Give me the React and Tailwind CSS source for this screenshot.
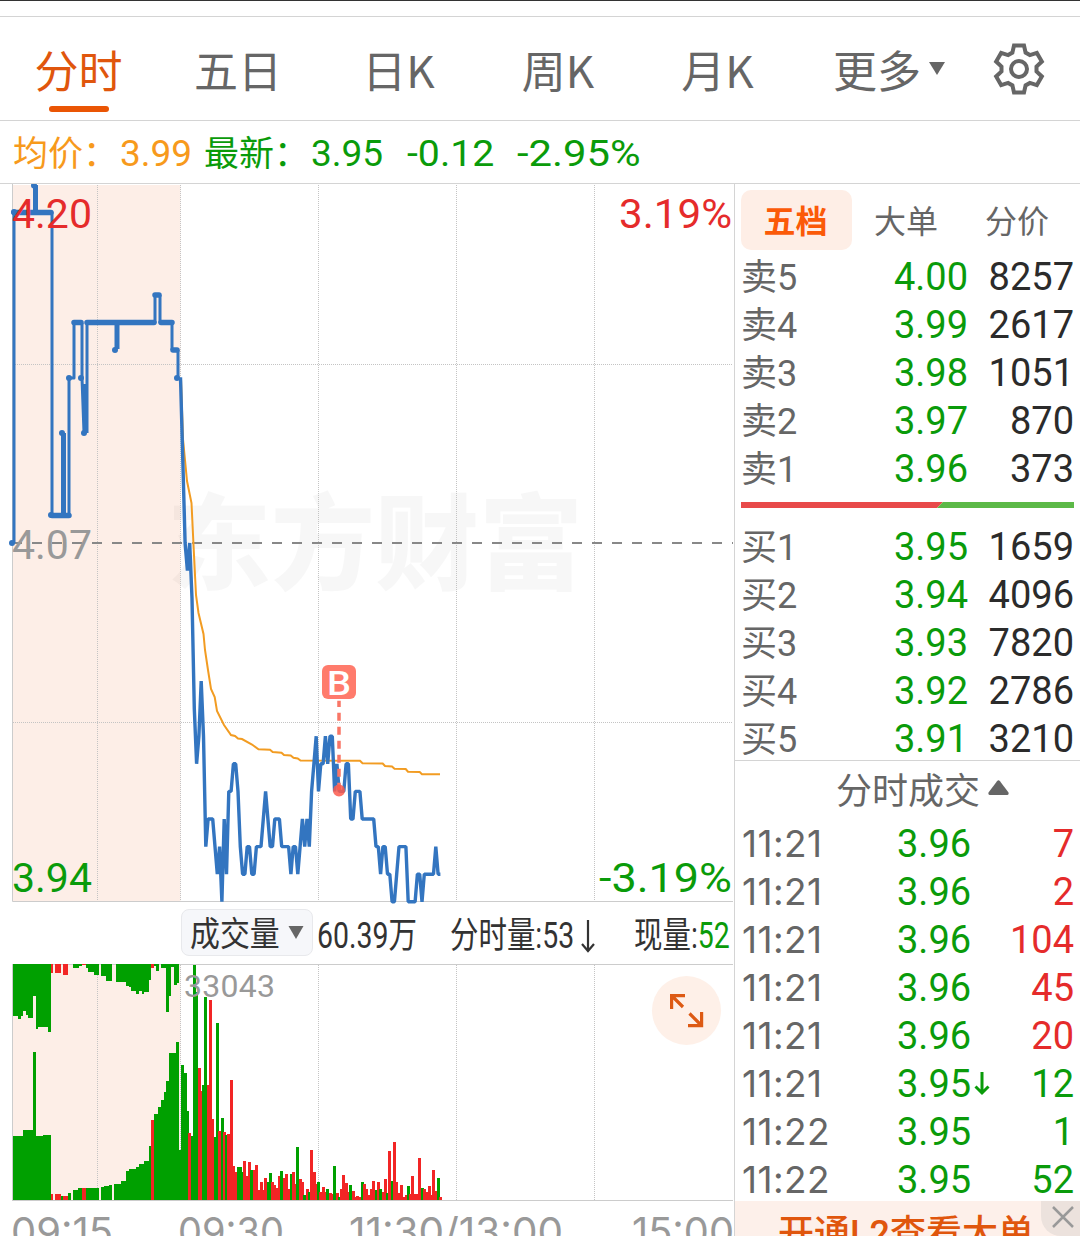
import clsx from 'clsx';

const GREEN = '#00a000';
const RED = '#f22525';
const BLUE = '#3375c0';

const TABS = [
  { label: '分时', width: 'w-[157px]', active: true },
  { label: '五日', width: 'w-[162px]' },
  { label: '日K', width: 'w-[159px]' },
  { label: '周K', width: 'w-[160px]' },
  { label: '月K', width: 'w-[159px]' },
];

const SELLS = [
  ['卖5', '4.00', '8257'],
  ['卖4', '3.99', '2617'],
  ['卖3', '3.98', '1051'],
  ['卖2', '3.97', '870'],
  ['卖1', '3.96', '373'],
];

const BUYS = [
  ['买1', '3.95', '1659'],
  ['买2', '3.94', '4096'],
  ['买3', '3.93', '7820'],
  ['买4', '3.92', '2786'],
  ['买5', '3.91', '3210'],
];

const TRADES = [
  { time: '11:21', price: '3.96', volume: '7', up: true },
  { time: '11:21', price: '3.96', volume: '2', up: true },
  { time: '11:21', price: '3.96', volume: '104', up: true },
  { time: '11:21', price: '3.96', volume: '45', up: true },
  { time: '11:21', price: '3.96', volume: '20', up: true },
  { time: '11:21', price: '3.95', volume: '12', arrow: true },
  { time: '11:22', price: '3.95', volume: '1' },
  { time: '11:22', price: '3.95', volume: '52' },
];

// one price per minute from 09:30, in cents
const PRICES = [
  413, 410, 407, 406, 407, 405, 401, 399, 400, 402, 400, 396, 397, 397, 397, 396, 395, 396, 394, 397,
  395, 398, 398, 399, 399, 398, 396, 395, 395, 396, 396, 395, 395, 396, 396, 396, 397, 398, 397, 396,
  396, 397, 397, 397, 396, 396, 396, 396, 395, 396, 396, 395, 396, 397, 396, 397, 396, 398, 399, 400,
  398, 399, 399, 400, 399, 400, 400, 398, 399, 398, 398, 398, 399, 399, 397, 397, 398, 398, 398, 397,
  397, 397, 397, 397, 397, 396, 396, 395, 396, 396, 395, 395, 394, 394, 395, 396, 396, 396, 396, 394,
  394, 394, 394, 395, 395, 394, 395, 395, 395, 395, 395, 396, 395, 395,
];

// bar heights per minute, negative for a falling minute
const VOLUMES = [
  -50, -135, -127, -89, 67, -64, -235, -208, 132, 109, -115, -203, 115, 200, 81, -63, -177, 69, -82, 68,
  -65, 66, 120, 34, 28, -33, -33, -28, 39, 24, 38, -30, 30, 35, 10, 18, 10, 22, -18, -27,
  18, 15, 12, 24, -29, 22, 26, 11, -26, 28, 16, -53, 21, 18, -5, 11, -8, 50, 28, 16,
  -18, 8, 13, 8, -11, 7, 6, -34, 7, -3, 11, 25, 17, 8, -15, 9, 3, 4, 3, -18,
  16, 11, 5, 11, 19, -10, 18, -11, 8, 21, -7, 49, -19, 58, 18, 7, 15, 3, 5, -14,
  6, 24, 6, 6, 42, -12, 11, 8, 14, 5, 30, 9, -22, 3,
];

// opening auction: [x1, x2, height, red]
const AUCTION_BOTTOM = [
  [12.5, 23, 64], [23, 33, 70], [33, 35.7, 148], [35.7, 43.3, 64], [43.3, 51, 65],
  [51, 53.4, 6, true], [55.4, 60.7, 6, true], [60.7, 63.3, 4.5], [63.3, 68.3, 4, true], [68.3, 71, 7.5],
  [73, 78.3, 10], [78.3, 82, 12], [82, 86, 12.5, true], [86, 99.4, 12], [101, 104, 13],
  [104, 109.3, 14.5], [109.3, 111.7, 15.5], [113.7, 121, 16], [121, 126.3, 19], [126.3, 129, 29],
  [129, 136.3, 31], [136.3, 139, 33], [139, 144, 36], [144, 148.7, 39], [148.7, 151.3, 54],
  [151.3, 154, 80, true], [154, 158.3, 86], [158.3, 161, 93], [161, 163.7, 100], [163.7, 166, 108],
  [166, 168.7, 119], [168.7, 176, 147], [176, 179.2, 158],
];

const AUCTION_TOP = [
  [12.5, 18, 52], [18, 20.7, 55], [20.7, 23.3, 52], [23.3, 25.7, 47], [25.7, 28.3, 51],
  [28.3, 33.3, 54], [33.3, 35.7, 32], [35.7, 38.3, 65], [38.3, 48, 63], [48, 51, 68],
  [51, 53.4, 9, true], [55.4, 60.7, 9, true], [63, 68.3, 11, true], [73, 79, 3.5], [79, 82, 2],
  [82, 86, 1, true], [86, 88.3, 4], [88.3, 93.7, 8], [93.7, 99.4, 10.5], [101, 106.3, 12],
  [106.3, 111.7, 17], [116.3, 126.3, 17.5], [126.3, 129, 21.5], [129, 131.3, 23], [131.3, 136.3, 27],
  [136.3, 139, 29.5], [139, 141.5, 27], [141.5, 144, 29.5], [144, 148.7, 28], [148.7, 151.3, 16],
  [151.3, 154, 4, true], [154, 156, 2], [156, 159, 6.5], [161, 166, 4], [166, 168.7, 47.5],
  [168.7, 171.3, 31.5], [171.3, 173.7, 3], [173.7, 176.5, 21], [176.5, 179, 19],
];

const GRID_X = [97.5, 180.5, 318.5, 456.5, 594.5];

const minuteX = (i) => 180.5 + i * 2.3;
const priceY = (cents) => 359 + (407 - cents) * 27.6;

function GearIcon() {
  const tooth = [[-6.6, -16.4], [-5, -23.5], [5, -23.5], [6.6, -16.4]];
  const points = [0, 60, 120, 180, 240, 300].flatMap((deg) => {
    const a = (deg * Math.PI) / 180;
    return tooth.map(([x, y]) => `${x * Math.cos(a) - y * Math.sin(a)},${x * Math.sin(a) + y * Math.cos(a)}`);
  });
  return (
    <svg width="54" height="54" viewBox="-27 -27 54 54" fill="none" stroke="#666" strokeWidth="4">
      <polygon points={points.join(' ')} />
      <circle r="8" />
    </svg>
  );
}

function Header() {
  return (
    <header className="flex h-[104px] items-center border-b border-[#d4d4d4] text-[44px] text-[#666]">
      {TABS.map((tab) => (
        <div key={tab.label} className={clsx('flex h-full flex-col items-center', tab.width, tab.active && 'text-[#e0560d]')}>
          <span className="mt-[19px] h-[70px] leading-[66px] whitespace-nowrap font-['Noto_Sans_CJK_SC',sans-serif]">{tab.label}</span>
          {tab.active && <span className="h-[6px] w-[60px] rounded-full bg-[#ea5504]" />}
        </div>
      ))}
      <div className="ml-[36px] flex h-full">
        <span className="mt-[23px] leading-[66px]">更多</span>
        <svg className="mt-[45px] ml-[8px]" width="16" height="13" viewBox="0 0 16 13">
          <path d="M0 0H16L8 13Z" fill="#666" />
        </svg>
      </div>
      <div className="ml-[47px]">
        <GearIcon />
      </div>
    </header>
  );
}

function QuoteLine() {
  return (
    <div className="flex h-[63px] items-center border-b border-[#d4d4d4] pt-[4px] pl-[13px] text-[37px] whitespace-nowrap text-[#0a9b0a]">
      <span className="w-[107px] pt-[3px] text-[35px] text-[#f79a1c]">均价：</span>
      <span className="w-[84px] text-[#f79a1c]">3.99</span>
      <span className="w-[107px] pt-[3px] text-[35px]">最新：</span>
      <span className="w-[96px]">3.95</span>
      <span className="w-[110px] origin-left scale-x-[1.06]">-0.12</span>
      <span className="origin-left scale-x-[1.13]">-2.95%</span>
    </div>
  );
}

function PriceChart() {
  const line = PRICES.map((p, i) => `${minuteX(i)},${priceY(p)}`).join(' ');
  return (
    <svg className="block" width="734" height="720" viewBox="0 0 734 720">
      <rect x="12" y="1" width="168.5" height="716" fill="#fdeee7" />
      <text x="167" y="398" fontSize="104" fontWeight="900" fill="#000" fillOpacity="0.03" textLength="416">
        东方财富
      </text>
      <g stroke="#c4c4c4" strokeDasharray="1 1">
        {GRID_X.map((x) => (
          <path key={x} d={`M${x} 1V717`} />
        ))}
        <path d="M13 180.5H733M13 538.5H733" />
      </g>
      <path d="M12.5 0V717.5H733" fill="none" stroke="#ccc" />
      <path d="M12 359H733" stroke="#888" strokeWidth="2" strokeDasharray="10 10" />

      <text x="12" y="375" fontSize="41" fill="#999">4.07</text>
      <polyline
        points="181,195 183,255 187,297 191.5,319 193.5,361 196,411 198.5,429 203.5,450 205,466 208,486 211,505 214.7,513 217,527 224,541 231,551 235,552 238,554.5 242,555 252,560.5 258.5,565.3 270,565.7 272.7,568 281.5,568.7 284,571 290.7,571.5 293.5,573.7 297.7,574.5 300.5,576.5 360,576.7 362.5,579.3 382.7,579.5 385,582 392,582.5 394.5,584.7 405.7,585 408,587.7 419.7,588 422,590.3 440,590.3"
        fill="none"
        stroke="#f29c22"
        strokeWidth="2"
      />
      <g fill="none" stroke={BLUE} strokeWidth="3" strokeLinejoin="round">
        <path d="M14 359V28M52 28V331M69 331V194H74V139M82 139V194L84 249M87 249V139M155 139V111M160 111V139M172 139V166M178 166V194" />
        <path d="M35.5 1V28M63.5 249V331M85.5 200V248M117 139V165" strokeWidth="5" />
        <path d="M14 28.5H51M52 331.5H69M74 138.5H81M87 138.5H154M161 138.5H172M155 111H159M173 166H177" strokeWidth="5.5" strokeLinecap="round" />
        <polyline points={line} strokeWidth="3.4" strokeLinejoin="miter" strokeMiterlimit="1" />
      </g>
      <g fill={BLUE}>
        {[[12, 359], [14, 28], [34, 1.5], [51, 331], [62, 249], [69, 194], [81, 194], [84, 249], [115, 166], [177, 194]].map(([x, y]) => (
          <circle key={`${x}-${y}`} cx={x} cy={y} r="3" />
        ))}
      </g>

      <path d="M339 516.7V523M339 528.7V606" stroke="#f97666" strokeWidth="3.5" strokeDasharray="8 6" />
      <circle cx="339" cy="606.5" r="6" fill="#fb5b4c" fillOpacity="0.85" />
      <rect x="322" y="481" width="34" height="34" rx="6" fill="#ff7b6c" />
      <text x="339" y="510.5" fontSize="34" fontWeight="500" fill="#fff" textAnchor="middle" textLength="24" lengthAdjust="spacingAndGlyphs">B</text>

      <g fontSize="41">
        <text x="12" y="43.5" fill="#e52b2b">4.20</text>
        <text x="12" y="707.5" fill="#0a9b0a">3.94</text>
        <text x="732" y="43.5" fill="#e52b2b" textAnchor="end" textLength="113" lengthAdjust="spacingAndGlyphs">3.19%</text>
        <text x="732" y="707.5" fill="#0a9b0a" textAnchor="end" textLength="133" lengthAdjust="spacingAndGlyphs">-3.19%</text>
      </g>
    </svg>
  );
}

function VolumeBar() {
  return (
    <div className="flex h-[60px] items-start text-[36px] leading-[54px] whitespace-nowrap text-[#333]">
      <div className="mt-[5px] ml-[181px] flex h-[47px] w-[132px] shrink-0 items-center rounded-[8px] border border-[#e8e9ec] bg-[#f6f7fa] pl-[8px]">
        <span className="w-[90px] shrink-0 origin-left scale-x-[0.88] pt-[2px] text-[34px]">成交量</span>
        <svg className="ml-[8px] shrink-0" width="16" height="13" viewBox="0 0 16 13">
          <path d="M0.5 0H15.5L8 13Z" fill="#666" />
        </svg>
      </div>
      <span className="mt-[5px] ml-[4px] w-[133px] shrink-0 origin-left scale-x-[0.79]">60.39万</span>
      <span className="mt-[5px] flex w-[184px] shrink-0 items-center">
        <span className="w-[131px] shrink-0 origin-left scale-x-[0.79]">分时量:53</span>
        <svg className="shrink-0" width="14" height="33" viewBox="0 0 14 33" fill="none" stroke="#333" strokeWidth="2.2">
          <path d="M7 0V31M1 24L7 31L13 24" />
        </svg>
      </span>
      <span className="mt-[5px] w-[100px] shrink-0 origin-left scale-x-[0.79]">
        现量:<span className="text-[#0a9b0a]">52</span>
      </span>
    </div>
  );
}

function VolumeChart() {
  return (
    <svg className="block" width="734" height="272" viewBox="0 0 734 272">
      <rect x="12" y="0" width="168.5" height="236" fill="#fdeee7" />
      <g stroke="#c4c4c4" strokeDasharray="1 1">
        {GRID_X.map((x) => (
          <path key={x} d={`M${x} 1V236`} />
        ))}
      </g>
      <path d="M12.5 0V236M12 0.5H733M12 236.5H733" stroke="#ccc" />
      <g shapeRendering="crispEdges">
        {AUCTION_TOP.map(([x1, x2, h, red]) => (
          <rect key={x1} x={x1} y="0" width={x2 - x1} height={h} fill={red ? RED : GREEN} />
        ))}
        {AUCTION_BOTTOM.map(([x1, x2, h, red]) => (
          <rect key={x1} x={x1} y={236 - h} width={x2 - x1} height={h} fill={red ? RED : GREEN} />
        ))}
        {VOLUMES.map((v, i) => (
          <rect key={i} x={Math.round(minuteX(i) - 1.4)} y={236 - Math.abs(v)} width="3" height={Math.abs(v)} fill={v < 0 ? GREEN : RED} />
        ))}
      </g>
      <text x="184" y="33" fontSize="32" fill="#999" textLength="91">33043</text>

      <circle cx="686.5" cy="46.5" r="34.5" fill="#fef0e8" />
      <g fill="none" stroke="#dd5a14" strokeWidth="3.2">
        <path d="M685 31.6H671.6V45M672 32L683 43" />
        <path d="M688 61.6H701.6V48M701 61L689.5 49.5" />
      </g>

      <g fontSize="39" fill="#999" fontFamily="Inter, Roboto, sans-serif">
        <text x="11" y="282" textLength="102" lengthAdjust="spacingAndGlyphs">09:15</text>
        <text x="178" y="282" textLength="106" lengthAdjust="spacingAndGlyphs">09:30</text>
        <text x="349" y="282" textLength="214" lengthAdjust="spacingAndGlyphs">11:30/13:00</text>
        <text x="632" y="282" textLength="102" lengthAdjust="spacingAndGlyphs">15:00</text>
      </g>
    </svg>
  );
}

function BookRow({ label, price, volume }) {
  return (
    <div className="flex h-[48px] items-center text-[38px]">
      <span className="flex-1 pt-[1px] text-[36px] text-[#666]">{label}</span>
      <span className="text-[#0a9b0a]">{price}</span>
      <span className="w-[106px] text-right text-[#2b2b2b]">{volume}</span>
    </div>
  );
}

function TradeRow({ time, price, volume, up, arrow }) {
  return (
    <div className="flex h-[48px] items-center text-[38px] text-[#0a9b0a]">
      <span className="w-[155px] font-['Inter',sans-serif] text-[37px] tracking-[0.4px] text-[#666]">{time}</span>
      <span className="flex flex-1 items-center">
        {price}
        {arrow && (
          <svg className="ml-[3px]" width="16" height="24" viewBox="0 0 16 24" fill="none" stroke="#0a9b0a" strokeWidth="3">
            <path d="M8 0V21M1.5 14.5L8 21L14.5 14.5" />
          </svg>
        )}
      </span>
      <span className={clsx(up && 'text-[#e52b2b]')}>{volume}</span>
    </div>
  );
}

function SidePanel() {
  return (
    <aside className="flex h-[1052px] w-[346px] flex-col border-l border-[#d4d4d4]">
      <div className="mt-[6px] flex h-[60px] pl-[6px] text-[32px] leading-[64px] text-[#666]">
        <span className="h-[60px] w-[111px] rounded-[10px] bg-[#feeee6] pr-[2px] text-center font-bold text-[#fb5a08]">五档</span>
        <span className="ml-[22px] w-[111px]">大单</span>
        <span>分价</span>
      </div>
      <div className="mt-[3px] pr-[6px] pl-[6px]">
        {SELLS.map(([label, price, volume]) => (
          <BookRow key={label} label={label} price={price} volume={volume} />
        ))}
      </div>
      <svg className="mt-[9px] ml-[6px] block shrink-0" width="333" height="6" viewBox="0 0 333 6">
        <path d="M0 0H202L196 6H0Z" fill="#e84a4a" />
        <path d="M202 0H333V6H196Z" fill="#5cb947" />
      </svg>
      <div className="mt-[15px] h-[237px] shrink-0 pr-[6px] pl-[6px]">
        {BUYS.map(([label, price, volume]) => (
          <BookRow key={label} label={label} price={price} volume={volume} />
        ))}
      </div>
      <div className="flex h-[60px] shrink-0 items-center border-t border-[#d4d4d4] pl-[101px] text-[36px] text-[#666]">
        <span className="pt-[2px]">分时成交</span>
        <svg className="mb-[7px] ml-[8px]" width="21" height="15" viewBox="0 0 21 15">
          <path d="M9 1.2Q10.5 -0.5 12 1.2L20.5 12.5Q21 15 19 15H2Q0 15 0.5 12.5Z" fill="#666" />
        </svg>
      </div>
      <div className="h-[381px] shrink-0 pr-[6px] pl-[7px]">
        {TRADES.map((trade, i) => (
          <TradeRow key={i} {...trade} />
        ))}
      </div>
      <div className="flex min-h-0 flex-1 overflow-hidden bg-[#fdf0ea]">
        <span className="ml-[43px] h-[35px] w-[263px] text-[36px] leading-[66px] font-medium whitespace-nowrap text-[#e0560d]">开通L2查看大单</span>
        <span className="flex h-[35px] flex-1 items-center justify-center rounded-bl-[20px] bg-[#ece2dd] pl-[5px]">
          <svg className="-mt-[3px]" width="22" height="22" viewBox="0 0 22 22" stroke="#999" strokeWidth="2.5">
            <path d="M1 1L21 21M21 1L1 21" />
          </svg>
        </span>
      </div>
    </aside>
  );
}

export default function App() {
  return (
    <div className="h-[1236px] w-[1080px] overflow-hidden bg-white font-['Roboto','Noto_Sans_CJK_SC',sans-serif]">
      <div className="h-[17px] border-t border-b border-t-[#333] border-b-[#d4d4d4]" />
      <Header />
      <QuoteLine />
      <div className="flex">
        <main className="w-[734px]">
          <PriceChart />
          <VolumeBar />
          <VolumeChart />
        </main>
        <SidePanel />
      </div>
    </div>
  );
}
